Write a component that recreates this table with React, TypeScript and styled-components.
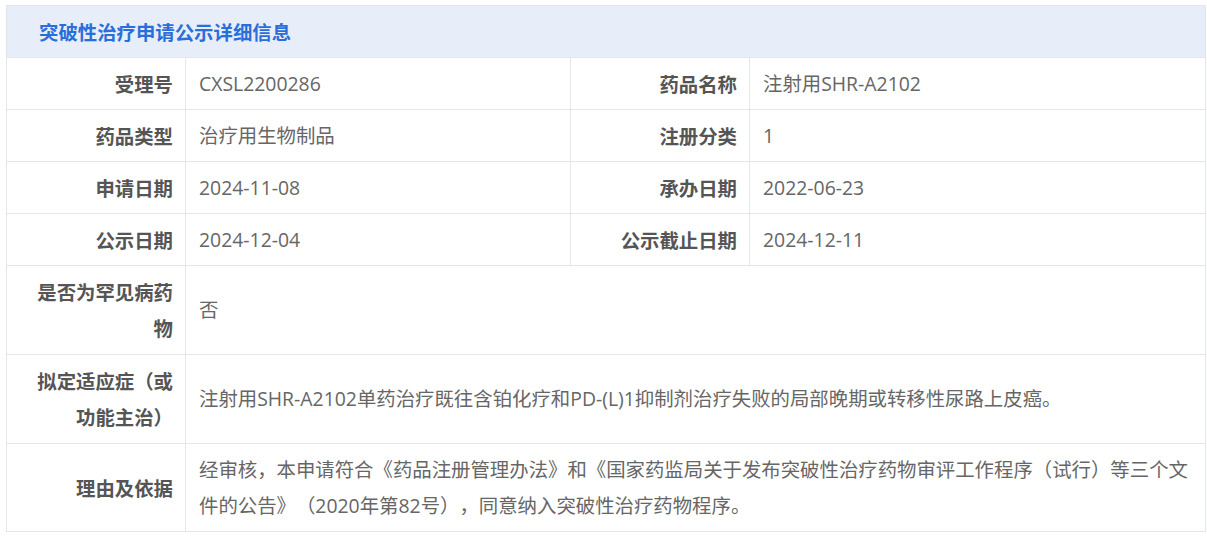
import React from "react";
import styled, { createGlobalStyle } from "styled-components";

const GlobalStyle = createGlobalStyle`
  html, body {
    margin: 0;
    padding: 0;
    background: #fff;
    font-family: "Open Sans", "Noto Sans CJK SC", sans-serif;
  }
`;

const Wrapper = styled.div`
  padding: 5px 2px 0 6px;
`;

const Table = styled.table`
  width: 1199px;
  border-collapse: collapse;
  table-layout: fixed;
  font-size: 19.4px;
  text-spacing-trim: space-all;
`;

const TitleCell = styled.th`
  height: 51px;
  padding: 0 0 0 32px;
  text-align: left;
  background: #e7eef9;
  color: #2a6fd9;
  font-family: "Noto Sans CJK SC", sans-serif;
  font-weight: 700;
  border: 1px solid #e3e6ea;
`;

const Label = styled.th`
  padding: 0 12px 0 22px;
  line-height: 36px;
  text-align: right;
  vertical-align: middle;
  font-family: "Noto Sans CJK SC", sans-serif;
  font-weight: 700;
  color: #555;
  border: 1px solid #e3e6ea;
`;

const Value = styled.td`
  padding: 0 12px 0 13px;
  line-height: 36px;
  vertical-align: middle;
  color: #666;
  border: 1px solid #e3e6ea;
`;

const Row = styled.tr<{ $h?: number }>`
  height: ${(p) => p.$h ?? 52}px;
`;

const pairs: [string, string, string, string][] = [
  ["受理号", "CXSL2200286", "药品名称", "注射用SHR-A2102"],
  ["药品类型", "治疗用生物制品", "注册分类", "1"],
  ["申请日期", "2024-11-08", "承办日期", "2022-06-23"],
  ["公示日期", "2024-12-04", "公示截止日期", "2024-12-11"],
];

const wide: [string, string, number][] = [
  ["是否为罕见病药物", "否", 89],
  [
    "拟定适应症（或功能主治）",
    "注射用SHR-A2102单药治疗既往含铂化疗和PD-(L)1抑制剂治疗失败的局部晚期或转移性尿路上皮癌。",
    89,
  ],
  [
    "理由及依据",
    "经审核，本申请符合《药品注册管理办法》和《国家药监局关于发布突破性治疗药物审评工作程序（试行）等三个文件的公告》（2020年第82号），同意纳入突破性治疗药物程序。",
    88,
  ],
];

export default function App() {
  return (
    <>
      <GlobalStyle />
      <Wrapper>
        <Table>
          <colgroup>
            <col style={{ width: 179 }} />
            <col style={{ width: 385 }} />
            <col style={{ width: 179 }} />
            <col style={{ width: 456 }} />
          </colgroup>
          <thead>
            <tr>
              <TitleCell colSpan={4}>突破性治疗申请公示详细信息</TitleCell>
            </tr>
          </thead>
          <tbody>
            {pairs.map(([a, b, c, d]) => (
              <Row key={a}>
                <Label>{a}</Label>
                <Value>{b}</Value>
                <Label>{c}</Label>
                <Value>{d}</Value>
              </Row>
            ))}
            {wide.map(([a, b, h]) => (
              <Row key={a} $h={h}>
                <Label>{a}</Label>
                <Value colSpan={3}>{b}</Value>
              </Row>
            ))}
          </tbody>
        </Table>
      </Wrapper>
    </>
  );
}
